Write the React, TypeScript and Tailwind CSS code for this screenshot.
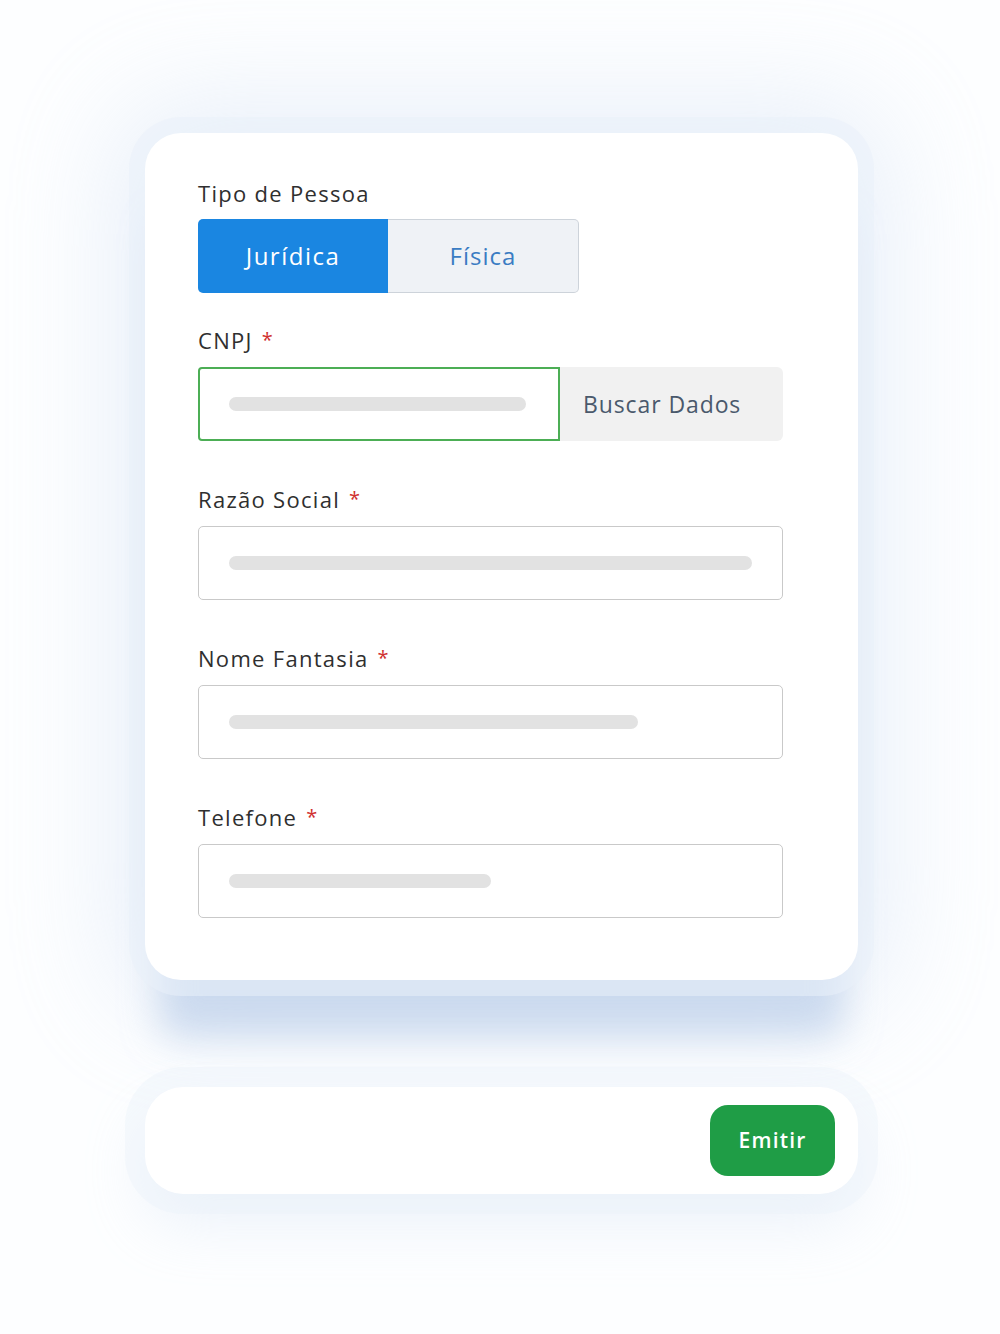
import React from "react";

function Label({ text, required = true }: { text: string; required?: boolean }) {
  return (
    <div className="flex items-center h-[28px] text-[22px] leading-[28px] text-[#2f2f2f] tracking-[1.3px]">
      <span>{text}</span>
      {required && <span className="ml-[9px] text-[#d0302f] text-[20px]">*</span>}
    </div>
  );
}

function Field({ label, bar }: { label: string; bar: number }) {
  return (
    <div className="mt-[44px]">
      <Label text={label} />
      <div className="mt-[13px] h-[74px] w-[585px] rounded-[5px] border-[1.5px] border-[#c9c9c9] bg-white flex items-center px-[30px]">
        <div className="h-[14px] rounded-full bg-[#e2e2e2]" style={{ width: bar }} />
      </div>
    </div>
  );
}

export default function App() {
  return (
    <div
      className="relative w-[1000px] h-[1334px] overflow-hidden bg-[#fdfeff] pt-[133px] pl-[145px] flex flex-col items-start"
      style={{ fontFamily: '"Open Sans", "Liberation Sans", sans-serif' }}
    >
      <div className="w-[713px] rounded-[36px] bg-white shadow-[0_0_0_16px_rgba(234,241,249,0.55),0_72px_36px_-14px_rgba(178,200,230,0.6),0_0_110px_30px_rgba(208,222,241,0.45)] pt-[46px] pb-[62px] pl-[53px]">
        <Label text="Tipo de Pessoa" required={false} />
        <div className="mt-[12px] flex w-[381px] h-[74px]">
          <div className="w-[190px] h-full rounded-l-[5px] bg-[#1a86e1] flex items-center justify-center text-white text-[24px] tracking-[1.5px]">
            Jurídica
          </div>
          <div className="flex-1 h-full rounded-r-[5px] bg-[#eff2f6] border-[1.5px] border-l-0 border-[#cdd3da] flex items-center justify-center text-[#3a7cc3] text-[24px] tracking-[1px]">
            Física
          </div>
        </div>

        <div className="mt-[33px]">
          <Label text="CNPJ" />
          <div className="mt-[13px] flex h-[74px] w-[585px]">
            <div className="w-[362px] h-full rounded-l-[4px] border-2 border-[#4cae55] bg-white flex items-center pl-[29px]">
              <div className="h-[14px] w-[297px] rounded-full bg-[#e2e2e2]" />
            </div>
            <div className="flex-1 h-full rounded-r-[6px] bg-[#f1f1f1] flex items-center pl-[23px] text-[23px] text-[#4a596c] tracking-[0.9px]">
              Buscar Dados
            </div>
          </div>
        </div>

        <Field label="Razão Social" bar={524} />
        <Field label="Nome Fantasia" bar={409} />
        <Field label="Telefone" bar={262} />
      </div>

      <div className="mt-[107px] w-[713px] h-[107px] rounded-[38px] bg-white shadow-[0_0_0_20px_rgba(236,242,249,0.4),0_30px_60px_0_rgba(200,216,238,0.3)] flex items-center justify-end pr-[23px]">
        <div className="w-[125px] h-[71px] rounded-[18px] bg-[#1f9d46] flex items-center justify-center text-white text-[21px] font-semibold tracking-[1.2px]">
          Emitir
        </div>
      </div>
    </div>
  );
}
